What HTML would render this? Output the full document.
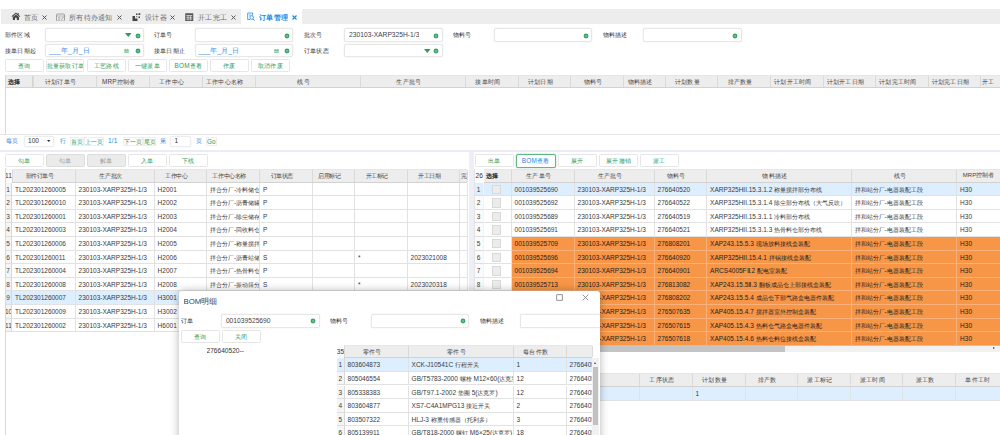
<!DOCTYPE html><html><head><meta charset="utf-8"><title>订单管理</title><style>
html,body{margin:0;padding:0;}
body{width:1000px;height:435px;overflow:hidden;background:#fff;position:relative;font-family:"Liberation Sans",sans-serif;font-size:6.5px;color:#3a3a3a;}
div{position:absolute;box-sizing:border-box;}
.t{white-space:nowrap;overflow:hidden;}
.tabbar{background:#ededed;}
.tab{color:#6a6a6a;font-size:7.3px;letter-spacing:.3px;}
.inp{background:#fff;border:1px solid #e7e7e7;border-radius:2px;box-shadow:0 0 1.5px rgba(0,0,0,.10);}
.lbl{font-size:6.4px;letter-spacing:.2px;color:#333;}
.btn{background:#fff;border:1px solid #e6e6e6;border-radius:1.5px;color:#2e9b5a;text-align:center;font-size:6.4px;letter-spacing:.25px;white-space:nowrap;overflow:hidden;}
.btn.dis{background:#ebebeb;color:#9a9a9a;border-color:#dcdcdc;}
.hdr{background:#ededed;border-bottom:1px solid #d2d2d2;border-top:1px solid #e6e6e6;}
.hc{border-right:1px solid #dadada;text-align:center;color:#444;font-size:6px;white-space:nowrap;overflow:hidden;}
.cell{border-right:1px solid #e2e2e2;border-bottom:1px solid #e2e2e2;white-space:nowrap;overflow:hidden;padding-left:3px;color:#3a3a3a;}
.row{ }
.sel .cell,.sel .rn{background:#ddeeff !important;}
.org .cell.d{background:#f79646;border-color:#f9b07a;color:#222;}
.rn{background:#f5f5f5;border-right:1px solid #d8d8d8;border-bottom:1px solid #dedede;text-align:center;color:#3a3a3a;white-space:nowrap;overflow:hidden;}
.dot{border-radius:50%;background:#2e9b5a;}
.dot:after{content:"";position:absolute;left:35%;top:35%;width:30%;height:30%;background:#fff;border-radius:50%;}
.tri{width:0;height:0;border-left:2.9px solid transparent;border-right:2.9px solid transparent;border-top:3.6px solid #2e9b5a;}
.c{font-size:.98em;}
.chk{background:#ececec;border:1px solid #d9d9d9;}
</style></head><body>
<div class="tabbar" style="left:1px;top:8.5px;width:999px;height:15px;"></div>
<div class="" style="left:240.8px;top:8.5px;width:61.4px;height:15px;background:#fff;"></div>
<svg style="position:absolute;left:10.8px;top:12.3px" width="9.8" height="8.2" viewBox="0 0 18 16"><path d="M9 1 L0.5 8.5 L2 9.8 L9 3.6 L16 9.8 L17.5 8.5 L14.5 5.8 V2 H12.5 V4.1 Z" fill="#444"/><path d="M3 10 L9 4.8 L15 10 V15.5 H10.8 V11 H7.2 V15.5 H3 Z" fill="#444"/></svg>
<div class="t tab" style="left:24px;top:12.7px;height:10px;line-height:10px;">首页</div>
<svg style="position:absolute;left:42px;top:15px" width="5" height="5" viewBox="0 0 10 10"><path d="M1 1 L9 9 M9 1 L1 9" stroke="#555" stroke-width="2.0"/></svg>
<svg style="position:absolute;left:56px;top:12.5px" width="9" height="8.5" viewBox="0 0 18 17"><rect x="1" y="2" width="16" height="14" rx="2" fill="none" stroke="#8a8a8a" stroke-width="1.5"/><path d="M1 6 H17" stroke="#8a8a8a" stroke-width="1.1"/><path d="M4 9.5 H9 M4 12.5 H8" stroke="#8a8a8a" stroke-width="1.3"/><path d="M10.5 13.5 L15.5 7.5" stroke="#8a8a8a" stroke-width="1.5"/></svg>
<div class="t tab" style="left:69px;top:12.7px;height:10px;line-height:10px;">所有待办通知</div>
<svg style="position:absolute;left:117px;top:15px" width="5" height="5" viewBox="0 0 10 10"><path d="M1 1 L9 9 M9 1 L1 9" stroke="#555" stroke-width="2.0"/></svg>
<svg style="position:absolute;left:132px;top:12.5px" width="9" height="8.5" viewBox="0 0 18 17"><path d="M1 6 H6 V11 H11 V16 H1 Z" fill="#444"/><rect x="8" y="1" width="3" height="3" fill="#444"/><rect x="13" y="0.5" width="3.5" height="3.5" fill="#444"/><rect x="13" y="7" width="3" height="3" fill="#444"/><rect x="8.5" y="6.5" width="2" height="2" fill="#444"/></svg>
<div class="t tab" style="left:145px;top:12.7px;height:10px;line-height:10px;">设计器</div>
<svg style="position:absolute;left:170px;top:15px" width="5" height="5" viewBox="0 0 10 10"><path d="M1 1 L9 9 M9 1 L1 9" stroke="#555" stroke-width="2.0"/></svg>
<svg style="position:absolute;left:185px;top:12.5px" width="8.5" height="8.5" viewBox="0 0 17 17"><rect x="0.5" y="0.5" width="16" height="16" fill="#555"/><path d="M2.5 5 H14.5 M2.5 8.5 H14.5 M2.5 12 H14.5" stroke="#ededed" stroke-width="1.4"/><path d="M6 5 V15 M11 5 V15" stroke="#ededed" stroke-width="1.2"/></svg>
<div class="t tab" style="left:198px;top:12.7px;height:10px;line-height:10px;">开工完工</div>
<svg style="position:absolute;left:231px;top:15px" width="5" height="5" viewBox="0 0 10 10"><path d="M1 1 L9 9 M9 1 L1 9" stroke="#555" stroke-width="2.0"/></svg>
<svg style="position:absolute;left:246px;top:12.2px" width="9.4" height="9" viewBox="0 0 18 18"><path d="M3 2 H13 V7" fill="none" stroke="#1e88e5" stroke-width="1.6"/><path d="M3 2 V15 H8" fill="none" stroke="#1e88e5" stroke-width="1.6"/><circle cx="11" cy="11" r="3.6" fill="none" stroke="#1e88e5" stroke-width="1.6"/><path d="M13.6 13.8 L17 17" stroke="#1e88e5" stroke-width="1.8"/><path d="M5.5 6 H10" stroke="#1e88e5" stroke-width="1.3"/></svg>
<div class="t tab" style="left:259px;top:12.7px;height:10px;line-height:10px;color:#1e88e5;font-weight:bold;font-size:7.2px;">订单管理</div>
<svg style="position:absolute;left:292px;top:15px" width="5" height="5" viewBox="0 0 10 10"><path d="M1 1 L9 9 M9 1 L1 9" stroke="#1e88e5" stroke-width="2.3"/></svg>
<div class="t lbl" style="left:5px;top:28px;height:14px;line-height:14px;">部件区域</div>
<div class="t lbl" style="left:154px;top:28px;height:14px;line-height:14px;">订单号</div>
<div class="t lbl" style="left:304px;top:28px;height:14px;line-height:14px;">批次号</div>
<div class="t lbl" style="left:453px;top:28px;height:14px;line-height:14px;">物料号</div>
<div class="t lbl" style="left:602.5px;top:28px;height:14px;line-height:14px;">物料描述</div>
<div class="inp" style="left:45.2px;top:28.2px;width:98.6px;height:13.4px;"></div>
<svg style="position:absolute;left:134.50px;top:32.50px" width="6" height="6" viewBox="0 0 6 6"><circle cx="3" cy="3" r="2.45" fill="#3aa568"/><circle cx="3" cy="3" r="0.7" fill="#b9e0c9"/></svg>
<svg style="position:absolute;left:125.40px;top:33.45px" width="6.6" height="3.9" viewBox="0 0 6.6 3.9"><path d="M0 0 H6.6 L3.3 3.9 Z" fill="#2e9b5a"/></svg>
<div class="inp" style="left:194.6px;top:28.2px;width:98.6px;height:13.4px;"></div>
<svg style="position:absolute;left:283.90px;top:32.50px" width="6" height="6" viewBox="0 0 6 6"><circle cx="3" cy="3" r="2.45" fill="#3aa568"/><circle cx="3" cy="3" r="0.7" fill="#b9e0c9"/></svg>
<div class="inp" style="left:344.1px;top:28.2px;width:98.6px;height:13.4px;"></div>
<div class="t " style="left:349.1px;top:28.2px;height:13.4px;line-height:13.4px;font-size:6.7px;color:#444;">230103-XARP325H-1/3</div>
<svg style="position:absolute;left:433.40px;top:32.50px" width="6" height="6" viewBox="0 0 6 6"><circle cx="3" cy="3" r="2.45" fill="#3aa568"/><circle cx="3" cy="3" r="0.7" fill="#b9e0c9"/></svg>
<div class="inp" style="left:493.6px;top:28.2px;width:98.6px;height:13.4px;"></div>
<svg style="position:absolute;left:582.90px;top:32.50px" width="6" height="6" viewBox="0 0 6 6"><circle cx="3" cy="3" r="2.45" fill="#3aa568"/><circle cx="3" cy="3" r="0.7" fill="#b9e0c9"/></svg>
<div class="inp" style="left:643px;top:28.2px;width:98.6px;height:13.4px;"></div>
<svg style="position:absolute;left:732.30px;top:32.50px" width="6" height="6" viewBox="0 0 6 6"><circle cx="3" cy="3" r="2.45" fill="#3aa568"/><circle cx="3" cy="3" r="0.7" fill="#b9e0c9"/></svg>
<div class="t lbl" style="left:5px;top:44px;height:14px;line-height:14px;">接单日期起</div>
<div class="t lbl" style="left:154px;top:44px;height:14px;line-height:14px;">接单日期止</div>
<div class="t lbl" style="left:304px;top:44px;height:14px;line-height:14px;">订单状态</div>
<div class="inp" style="left:45.2px;top:44px;width:98.6px;height:13.4px;"></div>
<div class="t " style="left:50.2px;top:44px;height:13.4px;line-height:13.4px;color:#3d8fe0;font-size:7.2px;margin-left:-1.4px;">___年_月_日</div>
<svg style="position:absolute;left:134.50px;top:48.30px" width="6" height="6" viewBox="0 0 6 6"><circle cx="3" cy="3" r="2.45" fill="#3aa568"/><circle cx="3" cy="3" r="0.7" fill="#b9e0c9"/></svg>
<svg style="position:absolute;left:124.20000000000002px;top:48.7px" width="5" height="4.6" viewBox="0 0 10 10"><rect x="0.5" y="1.5" width="9" height="8" fill="#6dbb8f"/><path d="M2 0 V3 M8 0 V3" stroke="#2e9b5a" stroke-width="1.6"/><path d="M0.5 5.5 H9.5 M3.5 3 V9.5 M6.5 3 V9.5" stroke="#e8f5ee" stroke-width="0.9"/></svg>
<div class="inp" style="left:194.6px;top:44px;width:98.6px;height:13.4px;"></div>
<div class="t " style="left:199.6px;top:44px;height:13.4px;line-height:13.4px;color:#3d8fe0;font-size:7.2px;margin-left:-1.4px;">___年_月_日</div>
<svg style="position:absolute;left:283.90px;top:48.30px" width="6" height="6" viewBox="0 0 6 6"><circle cx="3" cy="3" r="2.45" fill="#3aa568"/><circle cx="3" cy="3" r="0.7" fill="#b9e0c9"/></svg>
<svg style="position:absolute;left:273.59999999999997px;top:48.7px" width="5" height="4.6" viewBox="0 0 10 10"><rect x="0.5" y="1.5" width="9" height="8" fill="#6dbb8f"/><path d="M2 0 V3 M8 0 V3" stroke="#2e9b5a" stroke-width="1.6"/><path d="M0.5 5.5 H9.5 M3.5 3 V9.5 M6.5 3 V9.5" stroke="#e8f5ee" stroke-width="0.9"/></svg>
<div class="inp" style="left:344.1px;top:44px;width:98.6px;height:13.4px;"></div>
<svg style="position:absolute;left:433.40px;top:48.30px" width="6" height="6" viewBox="0 0 6 6"><circle cx="3" cy="3" r="2.45" fill="#3aa568"/><circle cx="3" cy="3" r="0.7" fill="#b9e0c9"/></svg>
<svg style="position:absolute;left:424.30px;top:49.25px" width="6.6" height="3.9" viewBox="0 0 6.6 3.9"><path d="M0 0 H6.6 L3.3 3.9 Z" fill="#2e9b5a"/></svg>
<div class="btn " style="left:5px;top:59.2px;width:38.7px;height:13.3px;line-height:11.8px;">查询</div>
<div class="btn " style="left:45.5px;top:59.2px;width:38.7px;height:13.3px;line-height:11.8px;">批量获取订单</div>
<div class="btn " style="left:87px;top:59.2px;width:38.7px;height:13.3px;line-height:11.8px;">工艺路线</div>
<div class="btn " style="left:128px;top:59.2px;width:38.7px;height:13.3px;line-height:11.8px;">一键派单</div>
<div class="btn " style="left:169px;top:59.2px;width:38.7px;height:13.3px;line-height:11.8px;">BOM查看</div>
<div class="btn " style="left:210px;top:59.2px;width:38.7px;height:13.3px;line-height:11.8px;">作废</div>
<div class="btn " style="left:251px;top:59.2px;width:38.7px;height:13.3px;line-height:11.8px;">取消作废</div>
<div class="hdr" style="left:5px;top:74.5px;width:995px;height:13.5px;"></div>
<div class="hc" style="left:5px;top:75.5px;width:28.6px;height:11.5px;line-height:11.5px;font-size:6.4px;letter-spacing:0.2px;padding-right:8px;">选择</div>
<div class="hc" style="left:33.6px;top:75.5px;width:62.99999999999999px;height:11.5px;line-height:11.5px;font-size:6.4px;letter-spacing:0.2px;padding-right:8px;">计划订单号</div>
<div class="hc" style="left:96.6px;top:75.5px;width:53.0px;height:11.5px;line-height:11.5px;font-size:6.4px;letter-spacing:0.2px;padding-right:8px;">MRP控制者</div>
<div class="hc" style="left:149.6px;top:75.5px;width:53.0px;height:11.5px;line-height:11.5px;font-size:6.4px;letter-spacing:0.2px;padding-right:8px;">工作中心</div>
<div class="hc" style="left:202.6px;top:75.5px;width:53.0px;height:11.5px;line-height:11.5px;font-size:6.4px;letter-spacing:0.2px;padding-right:8px;">工作中心名称</div>
<div class="hc" style="left:255.6px;top:75.5px;width:105.00000000000003px;height:11.5px;line-height:11.5px;font-size:6.4px;letter-spacing:0.2px;padding-right:8px;">线号</div>
<div class="hc" style="left:360.6px;top:75.5px;width:105.5px;height:11.5px;line-height:11.5px;font-size:6.4px;letter-spacing:0.2px;padding-right:8px;">生产批号</div>
<div class="hc" style="left:466.1px;top:75.5px;width:52.5px;height:11.5px;line-height:11.5px;font-size:6.4px;letter-spacing:0.2px;padding-right:8px;">接单时间</div>
<div class="hc" style="left:518.6px;top:75.5px;width:52.5px;height:11.5px;line-height:11.5px;font-size:6.4px;letter-spacing:0.2px;padding-right:8px;">计划日期</div>
<div class="hc" style="left:571.1px;top:75.5px;width:52.5px;height:11.5px;line-height:11.5px;font-size:6.4px;letter-spacing:0.2px;padding-right:8px;">物料号</div>
<div class="hc" style="left:623.6px;top:75.5px;width:42.0px;height:11.5px;line-height:11.5px;font-size:6.4px;letter-spacing:0.2px;padding-right:8px;">物料描述</div>
<div class="hc" style="left:665.6px;top:75.5px;width:52.5px;height:11.5px;line-height:11.5px;font-size:6.4px;letter-spacing:0.2px;padding-right:8px;">计划数量</div>
<div class="hc" style="left:718.1px;top:75.5px;width:53.0px;height:11.5px;line-height:11.5px;font-size:6.4px;letter-spacing:0.2px;padding-right:8px;">排产数量</div>
<div class="hc" style="left:771.1px;top:75.5px;width:52.5px;height:11.5px;line-height:11.5px;font-size:6.4px;letter-spacing:0.2px;padding-right:8px;">计划开工时间</div>
<div class="hc" style="left:823.6px;top:75.5px;width:52.5px;height:11.5px;line-height:11.5px;font-size:6.4px;letter-spacing:0.2px;padding-right:8px;">计划开工日期</div>
<div class="hc" style="left:876.1px;top:75.5px;width:52.5px;height:11.5px;line-height:11.5px;font-size:6.4px;letter-spacing:0.2px;padding-right:8px;">计划完工时间</div>
<div class="hc" style="left:928.6px;top:75.5px;width:52.5px;height:11.5px;line-height:11.5px;font-size:6.4px;letter-spacing:0.2px;padding-right:8px;">计划完工日期</div>
<div class="hc" style="left:981.1px;top:75.5px;width:22.5px;height:11.5px;line-height:11.5px;font-size:6.4px;letter-spacing:0.2px;padding-right:8px;">开工</div>
<div style="left:5px;top:75.5px;width:28px;height:11.5px;line-height:11px;font-weight:bold;color:#222;padding-left:3px;font-size:6.2px;background:#ececec;border-right:1px solid #d4d4d4;">选择</div>
<div class="" style="left:4.5px;top:74.5px;width:1px;height:60px;background:#d9d9d9;"></div>
<div class="" style="left:0px;top:134px;width:1000px;height:1px;background:#e6e6e6;"></div>
<div class="" style="left:0px;top:150px;width:1000px;height:2px;background:#ececf4;"></div>
<div class="t " style="left:6px;top:135px;height:12.5px;line-height:12.5px;color:#1e88e5;font-size:6.4px;letter-spacing:.25px;">每页</div>
<div class="inp" style="left:24px;top:135.5px;width:30px;height:11.5px;border-color:#ececec;"></div>
<div class="t " style="left:28px;top:135px;height:12.5px;line-height:12.5px;font-size:6.6px;color:#333;">100</div>
<svg style="position:absolute;left:47.30px;top:140.15px" width="3.4" height="2.1" viewBox="0 0 3.4 2.1"><path d="M0 0 H3.4 L1.7 2.1 Z" fill="#333"/></svg>
<div class="t " style="left:59.5px;top:135px;height:12.5px;line-height:12.5px;color:#1e88e5;font-size:6.4px;letter-spacing:.25px;">行</div>
<div class="t" style="left:70px;top:137.2px;width:14px;height:8.8px;line-height:7.5px;border:1px solid #eeeeee;background:#fefefe;color:#2e9b5a;font-size:6.4px;letter-spacing:.1px;text-align:center;">首页</div>
<div class="t" style="left:84px;top:137.2px;width:20px;height:8.8px;line-height:7.5px;border:1px solid #eeeeee;background:#fefefe;color:#2e9b5a;font-size:6.4px;letter-spacing:.1px;text-align:center;">上一页</div>
<div class="t " style="left:108px;top:135px;height:12.5px;line-height:12.5px;color:#1e88e5;font-size:6.4px;letter-spacing:.25px;">1/1</div>
<div class="t" style="left:122.5px;top:137.2px;width:20px;height:8.8px;line-height:7.5px;border:1px solid #eeeeee;background:#fefefe;color:#2e9b5a;font-size:6.4px;letter-spacing:.1px;text-align:center;">下一页</div>
<div class="t" style="left:142.5px;top:137.2px;width:13.5px;height:8.8px;line-height:7.5px;border:1px solid #eeeeee;background:#fefefe;color:#2e9b5a;font-size:6.4px;letter-spacing:.1px;text-align:center;">尾页</div>
<div class="t " style="left:160px;top:135px;height:12.5px;line-height:12.5px;color:#1e88e5;font-size:6.4px;letter-spacing:.25px;">第</div>
<div class="inp" style="left:170px;top:135.5px;width:20.5px;height:11.5px;border-color:#ececec;"></div>
<div class="t " style="left:174.5px;top:135px;height:12.5px;line-height:12.5px;font-size:6.6px;color:#333;">1</div>
<div class="t " style="left:196px;top:135px;height:12.5px;line-height:12.5px;color:#1e88e5;font-size:6.4px;letter-spacing:.25px;">页</div>
<div class="t" style="left:205.5px;top:137.2px;width:11.5px;height:8.8px;line-height:7.5px;border:1px solid #eeeeee;background:#fefefe;color:#2e9b5a;font-size:6.4px;letter-spacing:.1px;text-align:center;">Go</div>
<div class="btn " style="left:5px;top:154px;width:38.5px;height:13px;line-height:11.5px;">勾单</div>
<div class="btn dis" style="left:46px;top:154px;width:38.5px;height:13px;line-height:11.5px;">勾单</div>
<div class="btn dis" style="left:87px;top:154px;width:38.5px;height:13px;line-height:11.5px;">解单</div>
<div class="btn " style="left:128px;top:154px;width:38.5px;height:13px;line-height:11.5px;">入单</div>
<div class="btn " style="left:169px;top:154px;width:38.5px;height:13px;line-height:11.5px;">下线</div>
<div class="hdr" style="left:5px;top:168.5px;width:462px;height:14.1px;"></div>
<div class="hc" style="left:5px;top:169.5px;width:7.6px;height:12.1px;line-height:12.1px;font-size:5.8px;letter-spacing:-0.45px;padding-right:0px;"></div>
<div class="hc" style="left:12.6px;top:169.5px;width:62.99999999999999px;height:12.1px;line-height:12.1px;font-size:5.8px;letter-spacing:-0.45px;padding-right:8px;">部件订单号</div>
<div class="hc" style="left:75.6px;top:169.5px;width:79.0px;height:12.1px;line-height:12.1px;font-size:5.8px;letter-spacing:-0.45px;padding-right:8px;">生产批次</div>
<div class="hc" style="left:154.6px;top:169.5px;width:52.5px;height:12.1px;line-height:12.1px;font-size:5.8px;letter-spacing:-0.45px;padding-right:8px;">工作中心</div>
<div class="hc" style="left:207.1px;top:169.5px;width:53.00000000000003px;height:12.1px;line-height:12.1px;font-size:5.8px;letter-spacing:-0.45px;padding-right:8px;">工作中心名称</div>
<div class="hc" style="left:260.1px;top:169.5px;width:52.5px;height:12.1px;line-height:12.1px;font-size:5.8px;letter-spacing:-0.45px;padding-right:8px;">订单状态</div>
<div class="hc" style="left:312.6px;top:169.5px;width:42.5px;height:12.1px;line-height:12.1px;font-size:5.8px;letter-spacing:-0.45px;padding-right:8px;">启用标记</div>
<div class="hc" style="left:355.1px;top:169.5px;width:52.5px;height:12.1px;line-height:12.1px;font-size:5.8px;letter-spacing:-0.45px;padding-right:8px;">开工标记</div>
<div class="hc" style="left:407.6px;top:169.5px;width:52.5px;height:12.1px;line-height:12.1px;font-size:5.8px;letter-spacing:-0.45px;padding-right:8px;">开工日期</div>
<div class="hc" style="left:460.1px;top:169.5px;width:7.5px;height:12.1px;line-height:12.1px;font-size:5.8px;letter-spacing:-0.45px;padding-right:0px;">完</div>
<div class="t" style="left:5px;top:168.5px;width:7px;height:14px;line-height:14px;font-size:6.6px;background:#fbfbfb;color:#333;">11</div>
<div class="row " style="left:0;top:182.60px;width:1000px;height:13.6px;">
<div class="rn" style="left:5px;top:0;width:7px;height:13.6px;line-height:14.799999999999999px;">1</div>
<div class="cell d" style="left:12px;top:0;width:63.599999999999994px;height:13.6px;line-height:14.799999999999999px;">TL202301260005</div>
<div class="cell d" style="left:75.6px;top:0;width:79.0px;height:13.6px;line-height:14.799999999999999px;">230103-XARP325H-1/3</div>
<div class="cell d" style="left:154.6px;top:0;width:52.5px;height:13.6px;line-height:14.799999999999999px;">H2001</div>
<div class="cell d" style="left:207.1px;top:0;width:53.00000000000003px;height:13.6px;line-height:14.799999999999999px;"><span class="c">拌合分厂</span>-<span class="c">冷料储仓</span></div>
<div class="cell d" style="left:260.1px;top:0;width:52.5px;height:13.6px;line-height:14.799999999999999px;">P</div>
<div class="cell d" style="left:312.6px;top:0;width:42.5px;height:13.6px;line-height:14.799999999999999px;"></div>
<div class="cell d" style="left:355.1px;top:0;width:52.5px;height:13.6px;line-height:14.799999999999999px;"></div>
<div class="cell d" style="left:407.6px;top:0;width:52.5px;height:13.6px;line-height:14.799999999999999px;"></div>
<div class="cell d" style="left:460.1px;top:0;width:7.5px;height:13.6px;line-height:14.799999999999999px;"></div>
</div>
<div class="row " style="left:0;top:196.20px;width:1000px;height:13.6px;">
<div class="rn" style="left:5px;top:0;width:7px;height:13.6px;line-height:14.799999999999999px;">2</div>
<div class="cell d" style="left:12px;top:0;width:63.599999999999994px;height:13.6px;line-height:14.799999999999999px;">TL202301260010</div>
<div class="cell d" style="left:75.6px;top:0;width:79.0px;height:13.6px;line-height:14.799999999999999px;">230103-XARP325H-1/3</div>
<div class="cell d" style="left:154.6px;top:0;width:52.5px;height:13.6px;line-height:14.799999999999999px;">H2002</div>
<div class="cell d" style="left:207.1px;top:0;width:53.00000000000003px;height:13.6px;line-height:14.799999999999999px;"><span class="c">拌合分厂</span>-<span class="c">沥青储罐</span></div>
<div class="cell d" style="left:260.1px;top:0;width:52.5px;height:13.6px;line-height:14.799999999999999px;">P</div>
<div class="cell d" style="left:312.6px;top:0;width:42.5px;height:13.6px;line-height:14.799999999999999px;"></div>
<div class="cell d" style="left:355.1px;top:0;width:52.5px;height:13.6px;line-height:14.799999999999999px;"></div>
<div class="cell d" style="left:407.6px;top:0;width:52.5px;height:13.6px;line-height:14.799999999999999px;"></div>
<div class="cell d" style="left:460.1px;top:0;width:7.5px;height:13.6px;line-height:14.799999999999999px;"></div>
</div>
<div class="row " style="left:0;top:209.80px;width:1000px;height:13.6px;">
<div class="rn" style="left:5px;top:0;width:7px;height:13.6px;line-height:14.799999999999999px;">3</div>
<div class="cell d" style="left:12px;top:0;width:63.599999999999994px;height:13.6px;line-height:14.799999999999999px;">TL202301260001</div>
<div class="cell d" style="left:75.6px;top:0;width:79.0px;height:13.6px;line-height:14.799999999999999px;">230103-XARP325H-1/3</div>
<div class="cell d" style="left:154.6px;top:0;width:52.5px;height:13.6px;line-height:14.799999999999999px;">H2003</div>
<div class="cell d" style="left:207.1px;top:0;width:53.00000000000003px;height:13.6px;line-height:14.799999999999999px;"><span class="c">拌合分厂</span>-<span class="c">除尘储存</span></div>
<div class="cell d" style="left:260.1px;top:0;width:52.5px;height:13.6px;line-height:14.799999999999999px;">P</div>
<div class="cell d" style="left:312.6px;top:0;width:42.5px;height:13.6px;line-height:14.799999999999999px;"></div>
<div class="cell d" style="left:355.1px;top:0;width:52.5px;height:13.6px;line-height:14.799999999999999px;"></div>
<div class="cell d" style="left:407.6px;top:0;width:52.5px;height:13.6px;line-height:14.799999999999999px;"></div>
<div class="cell d" style="left:460.1px;top:0;width:7.5px;height:13.6px;line-height:14.799999999999999px;"></div>
</div>
<div class="row " style="left:0;top:223.40px;width:1000px;height:13.6px;">
<div class="rn" style="left:5px;top:0;width:7px;height:13.6px;line-height:14.799999999999999px;">4</div>
<div class="cell d" style="left:12px;top:0;width:63.599999999999994px;height:13.6px;line-height:14.799999999999999px;">TL202301260003</div>
<div class="cell d" style="left:75.6px;top:0;width:79.0px;height:13.6px;line-height:14.799999999999999px;">230103-XARP325H-1/3</div>
<div class="cell d" style="left:154.6px;top:0;width:52.5px;height:13.6px;line-height:14.799999999999999px;">H2004</div>
<div class="cell d" style="left:207.1px;top:0;width:53.00000000000003px;height:13.6px;line-height:14.799999999999999px;"><span class="c">拌合分厂</span>-<span class="c">回收料仓</span></div>
<div class="cell d" style="left:260.1px;top:0;width:52.5px;height:13.6px;line-height:14.799999999999999px;">P</div>
<div class="cell d" style="left:312.6px;top:0;width:42.5px;height:13.6px;line-height:14.799999999999999px;"></div>
<div class="cell d" style="left:355.1px;top:0;width:52.5px;height:13.6px;line-height:14.799999999999999px;"></div>
<div class="cell d" style="left:407.6px;top:0;width:52.5px;height:13.6px;line-height:14.799999999999999px;"></div>
<div class="cell d" style="left:460.1px;top:0;width:7.5px;height:13.6px;line-height:14.799999999999999px;"></div>
</div>
<div class="row " style="left:0;top:237.00px;width:1000px;height:13.6px;">
<div class="rn" style="left:5px;top:0;width:7px;height:13.6px;line-height:14.799999999999999px;">5</div>
<div class="cell d" style="left:12px;top:0;width:63.599999999999994px;height:13.6px;line-height:14.799999999999999px;">TL202301260006</div>
<div class="cell d" style="left:75.6px;top:0;width:79.0px;height:13.6px;line-height:14.799999999999999px;">230103-XARP325H-1/3</div>
<div class="cell d" style="left:154.6px;top:0;width:52.5px;height:13.6px;line-height:14.799999999999999px;">H2005</div>
<div class="cell d" style="left:207.1px;top:0;width:53.00000000000003px;height:13.6px;line-height:14.799999999999999px;"><span class="c">拌合分厂</span>-<span class="c">称量搅拌</span></div>
<div class="cell d" style="left:260.1px;top:0;width:52.5px;height:13.6px;line-height:14.799999999999999px;">P</div>
<div class="cell d" style="left:312.6px;top:0;width:42.5px;height:13.6px;line-height:14.799999999999999px;"></div>
<div class="cell d" style="left:355.1px;top:0;width:52.5px;height:13.6px;line-height:14.799999999999999px;"></div>
<div class="cell d" style="left:407.6px;top:0;width:52.5px;height:13.6px;line-height:14.799999999999999px;"></div>
<div class="cell d" style="left:460.1px;top:0;width:7.5px;height:13.6px;line-height:14.799999999999999px;"></div>
</div>
<div class="row " style="left:0;top:250.60px;width:1000px;height:13.6px;">
<div class="rn" style="left:5px;top:0;width:7px;height:13.6px;line-height:14.799999999999999px;">6</div>
<div class="cell d" style="left:12px;top:0;width:63.599999999999994px;height:13.6px;line-height:14.799999999999999px;">TL202301260011</div>
<div class="cell d" style="left:75.6px;top:0;width:79.0px;height:13.6px;line-height:14.799999999999999px;">230103-XARP325H-1/3</div>
<div class="cell d" style="left:154.6px;top:0;width:52.5px;height:13.6px;line-height:14.799999999999999px;">H2006</div>
<div class="cell d" style="left:207.1px;top:0;width:53.00000000000003px;height:13.6px;line-height:14.799999999999999px;"><span class="c">拌合分厂</span>-<span class="c">沥青站储</span></div>
<div class="cell d" style="left:260.1px;top:0;width:52.5px;height:13.6px;line-height:14.799999999999999px;">S</div>
<div class="cell d" style="left:312.6px;top:0;width:42.5px;height:13.6px;line-height:14.799999999999999px;"></div>
<div class="cell d" style="left:355.1px;top:0;width:52.5px;height:13.6px;line-height:14.799999999999999px;">*</div>
<div class="cell d" style="left:407.6px;top:0;width:52.5px;height:13.6px;line-height:14.799999999999999px;">2023021008</div>
<div class="cell d" style="left:460.1px;top:0;width:7.5px;height:13.6px;line-height:14.799999999999999px;"></div>
</div>
<div class="row " style="left:0;top:264.20px;width:1000px;height:13.6px;">
<div class="rn" style="left:5px;top:0;width:7px;height:13.6px;line-height:14.799999999999999px;">7</div>
<div class="cell d" style="left:12px;top:0;width:63.599999999999994px;height:13.6px;line-height:14.799999999999999px;">TL202301260004</div>
<div class="cell d" style="left:75.6px;top:0;width:79.0px;height:13.6px;line-height:14.799999999999999px;">230103-XARP325H-1/3</div>
<div class="cell d" style="left:154.6px;top:0;width:52.5px;height:13.6px;line-height:14.799999999999999px;">H2007</div>
<div class="cell d" style="left:207.1px;top:0;width:53.00000000000003px;height:13.6px;line-height:14.799999999999999px;"><span class="c">拌合分厂</span>-<span class="c">热骨料仓</span></div>
<div class="cell d" style="left:260.1px;top:0;width:52.5px;height:13.6px;line-height:14.799999999999999px;">P</div>
<div class="cell d" style="left:312.6px;top:0;width:42.5px;height:13.6px;line-height:14.799999999999999px;"></div>
<div class="cell d" style="left:355.1px;top:0;width:52.5px;height:13.6px;line-height:14.799999999999999px;"></div>
<div class="cell d" style="left:407.6px;top:0;width:52.5px;height:13.6px;line-height:14.799999999999999px;"></div>
<div class="cell d" style="left:460.1px;top:0;width:7.5px;height:13.6px;line-height:14.799999999999999px;"></div>
</div>
<div class="row " style="left:0;top:277.80px;width:1000px;height:13.6px;">
<div class="rn" style="left:5px;top:0;width:7px;height:13.6px;line-height:14.799999999999999px;">8</div>
<div class="cell d" style="left:12px;top:0;width:63.599999999999994px;height:13.6px;line-height:14.799999999999999px;">TL202301260008</div>
<div class="cell d" style="left:75.6px;top:0;width:79.0px;height:13.6px;line-height:14.799999999999999px;">230103-XARP325H-1/3</div>
<div class="cell d" style="left:154.6px;top:0;width:52.5px;height:13.6px;line-height:14.799999999999999px;">H2008</div>
<div class="cell d" style="left:207.1px;top:0;width:53.00000000000003px;height:13.6px;line-height:14.799999999999999px;"><span class="c">拌合分厂</span>-<span class="c">振动筛分</span></div>
<div class="cell d" style="left:260.1px;top:0;width:52.5px;height:13.6px;line-height:14.799999999999999px;">S</div>
<div class="cell d" style="left:312.6px;top:0;width:42.5px;height:13.6px;line-height:14.799999999999999px;"></div>
<div class="cell d" style="left:355.1px;top:0;width:52.5px;height:13.6px;line-height:14.799999999999999px;">*</div>
<div class="cell d" style="left:407.6px;top:0;width:52.5px;height:13.6px;line-height:14.799999999999999px;">2023020318</div>
<div class="cell d" style="left:460.1px;top:0;width:7.5px;height:13.6px;line-height:14.799999999999999px;"></div>
</div>
<div class="row sel" style="left:0;top:291.40px;width:1000px;height:13.6px;">
<div class="rn" style="left:5px;top:0;width:7px;height:13.6px;line-height:14.799999999999999px;">9</div>
<div class="cell d" style="left:12px;top:0;width:63.599999999999994px;height:13.6px;line-height:14.799999999999999px;">TL202301260007</div>
<div class="cell d" style="left:75.6px;top:0;width:79.0px;height:13.6px;line-height:14.799999999999999px;">230103-XARP325H-1/3</div>
<div class="cell d" style="left:154.6px;top:0;width:52.5px;height:13.6px;line-height:14.799999999999999px;">H3001</div>
<div class="cell d" style="left:207.1px;top:0;width:53.00000000000003px;height:13.6px;line-height:14.799999999999999px;"></div>
<div class="cell d" style="left:260.1px;top:0;width:52.5px;height:13.6px;line-height:14.799999999999999px;"></div>
<div class="cell d" style="left:312.6px;top:0;width:42.5px;height:13.6px;line-height:14.799999999999999px;"></div>
<div class="cell d" style="left:355.1px;top:0;width:52.5px;height:13.6px;line-height:14.799999999999999px;"></div>
<div class="cell d" style="left:407.6px;top:0;width:52.5px;height:13.6px;line-height:14.799999999999999px;"></div>
<div class="cell d" style="left:460.1px;top:0;width:7.5px;height:13.6px;line-height:14.799999999999999px;"></div>
</div>
<div class="row " style="left:0;top:305.00px;width:1000px;height:13.6px;">
<div class="rn" style="left:5px;top:0;width:7px;height:13.6px;line-height:14.799999999999999px;">10</div>
<div class="cell d" style="left:12px;top:0;width:63.599999999999994px;height:13.6px;line-height:14.799999999999999px;">TL202301260009</div>
<div class="cell d" style="left:75.6px;top:0;width:79.0px;height:13.6px;line-height:14.799999999999999px;">230103-XARP325H-1/3</div>
<div class="cell d" style="left:154.6px;top:0;width:52.5px;height:13.6px;line-height:14.799999999999999px;">H3002</div>
<div class="cell d" style="left:207.1px;top:0;width:53.00000000000003px;height:13.6px;line-height:14.799999999999999px;"></div>
<div class="cell d" style="left:260.1px;top:0;width:52.5px;height:13.6px;line-height:14.799999999999999px;"></div>
<div class="cell d" style="left:312.6px;top:0;width:42.5px;height:13.6px;line-height:14.799999999999999px;"></div>
<div class="cell d" style="left:355.1px;top:0;width:52.5px;height:13.6px;line-height:14.799999999999999px;"></div>
<div class="cell d" style="left:407.6px;top:0;width:52.5px;height:13.6px;line-height:14.799999999999999px;"></div>
<div class="cell d" style="left:460.1px;top:0;width:7.5px;height:13.6px;line-height:14.799999999999999px;"></div>
</div>
<div class="row " style="left:0;top:318.60px;width:1000px;height:13.6px;">
<div class="rn" style="left:5px;top:0;width:7px;height:13.6px;line-height:14.799999999999999px;">11</div>
<div class="cell d" style="left:12px;top:0;width:63.599999999999994px;height:13.6px;line-height:14.799999999999999px;">TL202301260002</div>
<div class="cell d" style="left:75.6px;top:0;width:79.0px;height:13.6px;line-height:14.799999999999999px;">230103-XARP325H-1/3</div>
<div class="cell d" style="left:154.6px;top:0;width:52.5px;height:13.6px;line-height:14.799999999999999px;">H6001</div>
<div class="cell d" style="left:207.1px;top:0;width:53.00000000000003px;height:13.6px;line-height:14.799999999999999px;"></div>
<div class="cell d" style="left:260.1px;top:0;width:52.5px;height:13.6px;line-height:14.799999999999999px;"></div>
<div class="cell d" style="left:312.6px;top:0;width:42.5px;height:13.6px;line-height:14.799999999999999px;"></div>
<div class="cell d" style="left:355.1px;top:0;width:52.5px;height:13.6px;line-height:14.799999999999999px;"></div>
<div class="cell d" style="left:407.6px;top:0;width:52.5px;height:13.6px;line-height:14.799999999999999px;"></div>
<div class="cell d" style="left:460.1px;top:0;width:7.5px;height:13.6px;line-height:14.799999999999999px;"></div>
</div>
<div class="" style="left:4.5px;top:168px;width:1px;height:267px;background:#d9d9d9;"></div>
<div class="" style="left:468.5px;top:152px;width:5px;height:283px;background:#eeeef6;"></div>
<div class="btn " style="left:475px;top:154px;width:38.5px;height:13px;line-height:11.5px;">出单</div>
<div class="btn" style="left:516px;top:153.5px;width:39.5px;height:14px;line-height:12px;border:1px solid #5fb585;border-radius:2px;color:#1e88e5;box-shadow:0 0 1.5px rgba(46,155,90,.6);">BOM查看</div>
<div class="btn " style="left:558px;top:154px;width:38.5px;height:13px;line-height:11.5px;">展开</div>
<div class="btn " style="left:599px;top:154px;width:39px;height:13px;line-height:11.5px;">展开撤销</div>
<div class="btn " style="left:640px;top:154px;width:38.5px;height:13px;line-height:11.5px;">派工</div>
<div class="hdr" style="left:474.5px;top:168.5px;width:525.5px;height:14.1px;"></div>
<div class="hc" style="left:474.5px;top:169.5px;width:9.100000000000023px;height:12.1px;line-height:12.1px;font-size:6.2px;letter-spacing:0.2px;padding-right:0px;"></div>
<div class="hc" style="left:483.6px;top:169.5px;width:28.0px;height:12.1px;line-height:12.1px;font-size:6.2px;letter-spacing:0.2px;padding-right:8px;"></div>
<div class="hc" style="left:511.6px;top:169.5px;width:63.0px;height:12.1px;line-height:12.1px;font-size:6.2px;letter-spacing:0.2px;padding-right:8px;">生产单号</div>
<div class="hc" style="left:574.6px;top:169.5px;width:80.0px;height:12.1px;line-height:12.1px;font-size:6.2px;letter-spacing:0.2px;padding-right:8px;">生产批号</div>
<div class="hc" style="left:654.6px;top:169.5px;width:52.5px;height:12.1px;line-height:12.1px;font-size:6.2px;letter-spacing:0.2px;padding-right:8px;">物料号</div>
<div class="hc" style="left:707.1px;top:169.5px;width:144.5px;height:12.1px;line-height:12.1px;font-size:6.2px;letter-spacing:0.2px;padding-right:8px;">物料描述</div>
<div class="hc" style="left:851.6px;top:169.5px;width:105.5px;height:12.1px;line-height:12.1px;font-size:6.2px;letter-spacing:0.2px;padding-right:8px;">线号</div>
<div class="hc" style="left:957.1px;top:169.5px;width:53.5px;height:12.1px;line-height:12.1px;font-size:6.2px;letter-spacing:0.2px;padding-right:8px;"></div>
<div class="t" style="left:474.5px;top:168.5px;width:9px;height:14px;line-height:14px;font-size:6.6px;background:#fbfbfb;color:#333;padding-left:1px;">26</div>
<div class="t" style="left:484px;top:169.5px;width:26px;height:11.5px;line-height:11px;font-weight:bold;color:#222;padding-left:2px;font-size:6.2px;">选择</div>
<div class="t " style="left:957px;top:169.5px;width:43px;height:11.5px;line-height:11.5px;text-align:center;font-size:6px;color:#444;">MRP控制者</div>
<div class="row sel" style="left:0;top:182.60px;width:1000px;height:13.6px;">
<div class="rn" style="left:474.5px;top:0;width:9px;height:13.6px;line-height:14.799999999999999px;background-color:#fbfbfb;border-right-color:#f3f3f3;">1</div>
<div class="cell" style="left:483.5px;top:0;width:28.100000000000023px;height:13.6px;"><div class="chk" style="left:8px;top:2px;width:9.4px;height:9.4px;"></div></div>
<div class="cell d" style="left:511.6px;top:0;width:63.0px;height:13.6px;line-height:14.799999999999999px;">001039525690</div>
<div class="cell d" style="left:574.6px;top:0;width:80.0px;height:13.6px;line-height:14.799999999999999px;">230103-XARP325H-1/3</div>
<div class="cell d" style="left:654.6px;top:0;width:52.5px;height:13.6px;line-height:14.799999999999999px;">276640520</div>
<div class="cell d" style="left:707.1px;top:0;width:144.5px;height:13.6px;line-height:14.799999999999999px;">XARP325HII.15.3.1.2 <span class="c">称量搅拌部分布线</span></div>
<div class="cell d" style="left:851.6px;top:0;width:105.5px;height:13.6px;line-height:14.799999999999999px;"><span class="c">拌和站分厂</span>-<span class="c">电器装配工段</span></div>
<div class="cell d" style="left:957.1px;top:0;width:53.5px;height:13.6px;line-height:14.799999999999999px;">H30</div>
</div>
<div class="row " style="left:0;top:196.20px;width:1000px;height:13.6px;">
<div class="rn" style="left:474.5px;top:0;width:9px;height:13.6px;line-height:14.799999999999999px;background-color:#fbfbfb;border-right-color:#f3f3f3;">2</div>
<div class="cell" style="left:483.5px;top:0;width:28.100000000000023px;height:13.6px;"><div class="chk" style="left:8px;top:2px;width:9.4px;height:9.4px;"></div></div>
<div class="cell d" style="left:511.6px;top:0;width:63.0px;height:13.6px;line-height:14.799999999999999px;">001039525692</div>
<div class="cell d" style="left:574.6px;top:0;width:80.0px;height:13.6px;line-height:14.799999999999999px;">230103-XARP325H-1/3</div>
<div class="cell d" style="left:654.6px;top:0;width:52.5px;height:13.6px;line-height:14.799999999999999px;">276640522</div>
<div class="cell d" style="left:707.1px;top:0;width:144.5px;height:13.6px;line-height:14.799999999999999px;">XARP325HII.15.3.1.4 <span class="c">除尘部分布线（大气反吹）</span></div>
<div class="cell d" style="left:851.6px;top:0;width:105.5px;height:13.6px;line-height:14.799999999999999px;"><span class="c">拌和站分厂</span>-<span class="c">电器装配工段</span></div>
<div class="cell d" style="left:957.1px;top:0;width:53.5px;height:13.6px;line-height:14.799999999999999px;">H30</div>
</div>
<div class="row " style="left:0;top:209.80px;width:1000px;height:13.6px;">
<div class="rn" style="left:474.5px;top:0;width:9px;height:13.6px;line-height:14.799999999999999px;background-color:#fbfbfb;border-right-color:#f3f3f3;">3</div>
<div class="cell" style="left:483.5px;top:0;width:28.100000000000023px;height:13.6px;"><div class="chk" style="left:8px;top:2px;width:9.4px;height:9.4px;"></div></div>
<div class="cell d" style="left:511.6px;top:0;width:63.0px;height:13.6px;line-height:14.799999999999999px;">001039525689</div>
<div class="cell d" style="left:574.6px;top:0;width:80.0px;height:13.6px;line-height:14.799999999999999px;">230103-XARP325H-1/3</div>
<div class="cell d" style="left:654.6px;top:0;width:52.5px;height:13.6px;line-height:14.799999999999999px;">276640519</div>
<div class="cell d" style="left:707.1px;top:0;width:144.5px;height:13.6px;line-height:14.799999999999999px;">XARP325HII.15.3.1.1 <span class="c">冷料部分布线</span></div>
<div class="cell d" style="left:851.6px;top:0;width:105.5px;height:13.6px;line-height:14.799999999999999px;"><span class="c">拌和站分厂</span>-<span class="c">电器装配工段</span></div>
<div class="cell d" style="left:957.1px;top:0;width:53.5px;height:13.6px;line-height:14.799999999999999px;">H30</div>
</div>
<div class="row " style="left:0;top:223.40px;width:1000px;height:13.6px;">
<div class="rn" style="left:474.5px;top:0;width:9px;height:13.6px;line-height:14.799999999999999px;background-color:#fbfbfb;border-right-color:#f3f3f3;">4</div>
<div class="cell" style="left:483.5px;top:0;width:28.100000000000023px;height:13.6px;"><div class="chk" style="left:8px;top:2px;width:9.4px;height:9.4px;"></div></div>
<div class="cell d" style="left:511.6px;top:0;width:63.0px;height:13.6px;line-height:14.799999999999999px;">001039525691</div>
<div class="cell d" style="left:574.6px;top:0;width:80.0px;height:13.6px;line-height:14.799999999999999px;">230103-XARP325H-1/3</div>
<div class="cell d" style="left:654.6px;top:0;width:52.5px;height:13.6px;line-height:14.799999999999999px;">276640521</div>
<div class="cell d" style="left:707.1px;top:0;width:144.5px;height:13.6px;line-height:14.799999999999999px;">XARP325HII.15.3.1.3 <span class="c">热骨料仓部分布线</span></div>
<div class="cell d" style="left:851.6px;top:0;width:105.5px;height:13.6px;line-height:14.799999999999999px;"><span class="c">拌和站分厂</span>-<span class="c">电器装配工段</span></div>
<div class="cell d" style="left:957.1px;top:0;width:53.5px;height:13.6px;line-height:14.799999999999999px;">H30</div>
</div>
<div class="row org" style="left:0;top:237.00px;width:1000px;height:13.6px;">
<div class="rn" style="left:474.5px;top:0;width:9px;height:13.6px;line-height:14.799999999999999px;background-color:#fbfbfb;border-right-color:#f3f3f3;">5</div>
<div class="cell" style="left:483.5px;top:0;width:28.100000000000023px;height:13.6px;"><div class="chk" style="left:8px;top:2px;width:9.4px;height:9.4px;"></div></div>
<div class="cell d" style="left:511.6px;top:0;width:63.0px;height:13.6px;line-height:14.799999999999999px;">001039525709</div>
<div class="cell d" style="left:574.6px;top:0;width:80.0px;height:13.6px;line-height:14.799999999999999px;">230103-XARP325H-1/3</div>
<div class="cell d" style="left:654.6px;top:0;width:52.5px;height:13.6px;line-height:14.799999999999999px;">276808201</div>
<div class="cell d" style="left:707.1px;top:0;width:144.5px;height:13.6px;line-height:14.799999999999999px;">XAP243.15.5.3 <span class="c">现场放料接线盒装配</span></div>
<div class="cell d" style="left:851.6px;top:0;width:105.5px;height:13.6px;line-height:14.799999999999999px;"><span class="c">拌和站分厂</span>-<span class="c">电器装配工段</span></div>
<div class="cell d" style="left:957.1px;top:0;width:53.5px;height:13.6px;line-height:14.799999999999999px;">H30</div>
</div>
<div class="row org" style="left:0;top:250.60px;width:1000px;height:13.6px;">
<div class="rn" style="left:474.5px;top:0;width:9px;height:13.6px;line-height:14.799999999999999px;background-color:#fbfbfb;border-right-color:#f3f3f3;">6</div>
<div class="cell" style="left:483.5px;top:0;width:28.100000000000023px;height:13.6px;"><div class="chk" style="left:8px;top:2px;width:9.4px;height:9.4px;"></div></div>
<div class="cell d" style="left:511.6px;top:0;width:63.0px;height:13.6px;line-height:14.799999999999999px;">001039525696</div>
<div class="cell d" style="left:574.6px;top:0;width:80.0px;height:13.6px;line-height:14.799999999999999px;">230103-XARP325H-1/3</div>
<div class="cell d" style="left:654.6px;top:0;width:52.5px;height:13.6px;line-height:14.799999999999999px;">276640920</div>
<div class="cell d" style="left:707.1px;top:0;width:144.5px;height:13.6px;line-height:14.799999999999999px;">XARP325HII.15.4.1 <span class="c">拌锅接线盒装配</span></div>
<div class="cell d" style="left:851.6px;top:0;width:105.5px;height:13.6px;line-height:14.799999999999999px;"><span class="c">拌和站分厂</span>-<span class="c">电器装配工段</span></div>
<div class="cell d" style="left:957.1px;top:0;width:53.5px;height:13.6px;line-height:14.799999999999999px;">H30</div>
</div>
<div class="row org" style="left:0;top:264.20px;width:1000px;height:13.6px;">
<div class="rn" style="left:474.5px;top:0;width:9px;height:13.6px;line-height:14.799999999999999px;background-color:#fbfbfb;border-right-color:#f3f3f3;">7</div>
<div class="cell" style="left:483.5px;top:0;width:28.100000000000023px;height:13.6px;"><div class="chk" style="left:8px;top:2px;width:9.4px;height:9.4px;"></div></div>
<div class="cell d" style="left:511.6px;top:0;width:63.0px;height:13.6px;line-height:14.799999999999999px;">001039525694</div>
<div class="cell d" style="left:574.6px;top:0;width:80.0px;height:13.6px;line-height:14.799999999999999px;">230103-XARP325H-1/3</div>
<div class="cell d" style="left:654.6px;top:0;width:52.5px;height:13.6px;line-height:14.799999999999999px;">276640901</div>
<div class="cell d" style="left:707.1px;top:0;width:144.5px;height:13.6px;line-height:14.799999999999999px;">ARCS4005FⅡ.2 <span class="c">配电室装配</span></div>
<div class="cell d" style="left:851.6px;top:0;width:105.5px;height:13.6px;line-height:14.799999999999999px;"><span class="c">拌和站分厂</span>-<span class="c">电器装配工段</span></div>
<div class="cell d" style="left:957.1px;top:0;width:53.5px;height:13.6px;line-height:14.799999999999999px;">H30</div>
</div>
<div class="row org" style="left:0;top:277.80px;width:1000px;height:13.6px;">
<div class="rn" style="left:474.5px;top:0;width:9px;height:13.6px;line-height:14.799999999999999px;background-color:#fbfbfb;border-right-color:#f3f3f3;">8</div>
<div class="cell" style="left:483.5px;top:0;width:28.100000000000023px;height:13.6px;"><div class="chk" style="left:8px;top:2px;width:9.4px;height:9.4px;"></div></div>
<div class="cell d" style="left:511.6px;top:0;width:63.0px;height:13.6px;line-height:14.799999999999999px;">001039525713</div>
<div class="cell d" style="left:574.6px;top:0;width:80.0px;height:13.6px;line-height:14.799999999999999px;">230103-XARP325H-1/3</div>
<div class="cell d" style="left:654.6px;top:0;width:52.5px;height:13.6px;line-height:14.799999999999999px;">276813082</div>
<div class="cell d" style="left:707.1px;top:0;width:144.5px;height:13.6px;line-height:14.799999999999999px;">XAP243.15.5Ⅱ.3 <span class="c">翻板成品仓上部接线盒装配</span></div>
<div class="cell d" style="left:851.6px;top:0;width:105.5px;height:13.6px;line-height:14.799999999999999px;"><span class="c">拌和站分厂</span>-<span class="c">电器装配工段</span></div>
<div class="cell d" style="left:957.1px;top:0;width:53.5px;height:13.6px;line-height:14.799999999999999px;">H30</div>
</div>
<div class="row org" style="left:0;top:291.40px;width:1000px;height:13.6px;">
<div class="rn" style="left:474.5px;top:0;width:9px;height:13.6px;line-height:14.799999999999999px;background-color:#fbfbfb;border-right-color:#f3f3f3;">9</div>
<div class="cell" style="left:483.5px;top:0;width:28.100000000000023px;height:13.6px;"><div class="chk" style="left:8px;top:2px;width:9.4px;height:9.4px;"></div></div>
<div class="cell d" style="left:511.6px;top:0;width:63.0px;height:13.6px;line-height:14.799999999999999px;">001039525710</div>
<div class="cell d" style="left:574.6px;top:0;width:80.0px;height:13.6px;line-height:14.799999999999999px;">230103-XARP325H-1/3</div>
<div class="cell d" style="left:654.6px;top:0;width:52.5px;height:13.6px;line-height:14.799999999999999px;">276808202</div>
<div class="cell d" style="left:707.1px;top:0;width:144.5px;height:13.6px;line-height:14.799999999999999px;">XAP243.15.5.4 <span class="c">成品仓下部气路盒电器件装配</span></div>
<div class="cell d" style="left:851.6px;top:0;width:105.5px;height:13.6px;line-height:14.799999999999999px;"><span class="c">拌和站分厂</span>-<span class="c">电器装配工段</span></div>
<div class="cell d" style="left:957.1px;top:0;width:53.5px;height:13.6px;line-height:14.799999999999999px;">H30</div>
</div>
<div class="row org" style="left:0;top:305.00px;width:1000px;height:13.6px;">
<div class="rn" style="left:474.5px;top:0;width:9px;height:13.6px;line-height:14.799999999999999px;background-color:#fbfbfb;border-right-color:#f3f3f3;">10</div>
<div class="cell" style="left:483.5px;top:0;width:28.100000000000023px;height:13.6px;"><div class="chk" style="left:8px;top:2px;width:9.4px;height:9.4px;"></div></div>
<div class="cell d" style="left:511.6px;top:0;width:63.0px;height:13.6px;line-height:14.799999999999999px;">001039525702</div>
<div class="cell d" style="left:574.6px;top:0;width:80.0px;height:13.6px;line-height:14.799999999999999px;">230103-XARP325H-1/3</div>
<div class="cell d" style="left:654.6px;top:0;width:52.5px;height:13.6px;line-height:14.799999999999999px;">276507635</div>
<div class="cell d" style="left:707.1px;top:0;width:144.5px;height:13.6px;line-height:14.799999999999999px;">XAP405.15.4.7 <span class="c">搅拌器室外控制盒装配</span></div>
<div class="cell d" style="left:851.6px;top:0;width:105.5px;height:13.6px;line-height:14.799999999999999px;"><span class="c">拌和站分厂</span>-<span class="c">电器装配工段</span></div>
<div class="cell d" style="left:957.1px;top:0;width:53.5px;height:13.6px;line-height:14.799999999999999px;">H30</div>
</div>
<div class="row org" style="left:0;top:318.60px;width:1000px;height:13.6px;">
<div class="rn" style="left:474.5px;top:0;width:9px;height:13.6px;line-height:14.799999999999999px;background-color:#fbfbfb;border-right-color:#f3f3f3;">11</div>
<div class="cell" style="left:483.5px;top:0;width:28.100000000000023px;height:13.6px;"><div class="chk" style="left:8px;top:2px;width:9.4px;height:9.4px;"></div></div>
<div class="cell d" style="left:511.6px;top:0;width:63.0px;height:13.6px;line-height:14.799999999999999px;">001039525700</div>
<div class="cell d" style="left:574.6px;top:0;width:80.0px;height:13.6px;line-height:14.799999999999999px;">230103-XARP325H-1/3</div>
<div class="cell d" style="left:654.6px;top:0;width:52.5px;height:13.6px;line-height:14.799999999999999px;">276507615</div>
<div class="cell d" style="left:707.1px;top:0;width:144.5px;height:13.6px;line-height:14.799999999999999px;">XAP405.15.4.3 <span class="c">热料仓气路盒电器件装配</span></div>
<div class="cell d" style="left:851.6px;top:0;width:105.5px;height:13.6px;line-height:14.799999999999999px;"><span class="c">拌和站分厂</span>-<span class="c">电器装配工段</span></div>
<div class="cell d" style="left:957.1px;top:0;width:53.5px;height:13.6px;line-height:14.799999999999999px;">H30</div>
</div>
<div class="row org" style="left:0;top:332.20px;width:1000px;height:13.6px;">
<div class="rn" style="left:474.5px;top:0;width:9px;height:13.6px;line-height:14.799999999999999px;background-color:#fbfbfb;border-right-color:#f3f3f3;">12</div>
<div class="cell" style="left:483.5px;top:0;width:28.100000000000023px;height:13.6px;"><div class="chk" style="left:8px;top:2px;width:9.4px;height:9.4px;"></div></div>
<div class="cell d" style="left:511.6px;top:0;width:63.0px;height:13.6px;line-height:14.799999999999999px;">001039525701</div>
<div class="cell d" style="left:574.6px;top:0;width:80.0px;height:13.6px;line-height:14.799999999999999px;">230103-XARP325H-1/3</div>
<div class="cell d" style="left:654.6px;top:0;width:52.5px;height:13.6px;line-height:14.799999999999999px;">276507618</div>
<div class="cell d" style="left:707.1px;top:0;width:144.5px;height:13.6px;line-height:14.799999999999999px;">XAP405.15.4.6 <span class="c">热料仓料位接线盒装配</span></div>
<div class="cell d" style="left:851.6px;top:0;width:105.5px;height:13.6px;line-height:14.799999999999999px;"><span class="c">拌和站分厂</span>-<span class="c">电器装配工段</span></div>
<div class="cell d" style="left:957.1px;top:0;width:53.5px;height:13.6px;line-height:14.799999999999999px;">H30</div>
</div>
<div class="" style="left:474px;top:168.5px;width:1px;height:177px;background:#e4e4e4;"></div>
<div class="" style="left:474px;top:345.5px;width:526px;height:6.5px;background:#f1f1f1;"></div>
<div class="" style="left:474px;top:346px;width:311px;height:5.5px;background:#c4c4c4;"></div>
<div class="" style="left:992.5px;top:347.3px;width:0px;height:0px;border-top:1.6px solid transparent;border-bottom:1.6px solid transparent;border-left:2.2px solid #444;"></div>
<div class="hdr" style="left:474.5px;top:372.5px;width:525.5px;height:14px;"></div>
<div class="hc" style="left:474.5px;top:373.5px;width:60.60000000000002px;height:12px;line-height:12px;font-size:6.2px;letter-spacing:0.3px;padding-right:8px;"></div>
<div class="hc" style="left:535.1px;top:373.5px;width:52.5px;height:12px;line-height:12px;font-size:6.2px;letter-spacing:0.3px;padding-right:8px;"></div>
<div class="hc" style="left:587.6px;top:373.5px;width:52.60000000000002px;height:12px;line-height:12px;font-size:6.2px;letter-spacing:0.3px;padding-right:8px;"></div>
<div class="hc" style="left:640.2px;top:373.5px;width:52.39999999999998px;height:12px;line-height:12px;font-size:6.2px;letter-spacing:0.3px;padding-right:8px;">工序状态</div>
<div class="hc" style="left:692.6px;top:373.5px;width:53.0px;height:12px;line-height:12px;font-size:6.2px;letter-spacing:0.3px;padding-right:8px;">计划数量</div>
<div class="hc" style="left:745.6px;top:373.5px;width:52.5px;height:12px;line-height:12px;font-size:6.2px;letter-spacing:0.3px;padding-right:8px;">排产数</div>
<div class="hc" style="left:798.1px;top:373.5px;width:52.5px;height:12px;line-height:12px;font-size:6.2px;letter-spacing:0.3px;padding-right:8px;">派工标记</div>
<div class="hc" style="left:850.6px;top:373.5px;width:52.700000000000045px;height:12px;line-height:12px;font-size:6.2px;letter-spacing:0.3px;padding-right:8px;">派工时间</div>
<div class="hc" style="left:903.3000000000001px;top:373.5px;width:52.89999999999998px;height:12px;line-height:12px;font-size:6.2px;letter-spacing:0.3px;padding-right:8px;">派工数</div>
<div class="hc" style="left:956.2px;top:373.5px;width:52.39999999999998px;height:12px;line-height:12px;font-size:6.2px;letter-spacing:0.3px;padding-right:8px;">单件工时</div>
<div class="row sel" style="left:0;top:386.5px;width:1000px;height:14.6px;">
<div class="cell" style="left:474.5px;top:0;width:60.60000000000002px;height:14.6px;line-height:13.6px;"></div>
<div class="cell" style="left:535.1px;top:0;width:52.5px;height:14.6px;line-height:13.6px;"></div>
<div class="cell" style="left:587.6px;top:0;width:52.60000000000002px;height:14.6px;line-height:13.6px;"></div>
<div class="cell" style="left:640.2px;top:0;width:52.39999999999998px;height:14.6px;line-height:13.6px;"></div>
<div class="cell" style="left:692.6px;top:0;width:53.0px;height:14.6px;line-height:13.6px;">1</div>
<div class="cell" style="left:745.6px;top:0;width:52.5px;height:14.6px;line-height:13.6px;"></div>
<div class="cell" style="left:798.1px;top:0;width:52.5px;height:14.6px;line-height:13.6px;"></div>
<div class="cell" style="left:850.6px;top:0;width:52.700000000000045px;height:14.6px;line-height:13.6px;"></div>
<div class="cell" style="left:903.3000000000001px;top:0;width:52.89999999999998px;height:14.6px;line-height:13.6px;"></div>
<div class="cell" style="left:956.2px;top:0;width:52.39999999999998px;height:14.6px;line-height:13.6px;"></div>
</div>
<div style="left:179px;top:290.5px;width:420.6px;height:160px;background:#fff;border-radius:3px;box-shadow:0 0 8px rgba(0,0,0,.30);"></div>
<div class="t " style="left:183.5px;top:296px;height:12px;line-height:12px;font-size:7.8px;color:#444;">BOM明细</div>
<svg style="position:absolute;left:555.5px;top:293.5px" width="7" height="7" viewBox="0 0 14 14"><rect x="1.5" y="1.5" width="11" height="11" fill="none" stroke="#666" stroke-width="1.4"/></svg>
<svg style="position:absolute;left:582px;top:293.5px" width="7" height="7" viewBox="0 0 14 14"><path d="M1.5 1.5 L12.5 12.5 M12.5 1.5 L1.5 12.5" stroke="#666" stroke-width="1.4"/></svg>
<div class="t lbl" style="left:181px;top:314px;height:13.6px;line-height:13.6px;">订单</div>
<div class="inp" style="left:220.9px;top:314px;width:98.8px;height:13.6px;"></div>
<div class="t " style="left:225.9px;top:314px;height:13.6px;line-height:13.6px;font-size:6.7px;color:#444;">001039525690</div>
<svg style="position:absolute;left:310.40px;top:318.40px" width="6" height="6" viewBox="0 0 6 6"><circle cx="3" cy="3" r="2.45" fill="#3aa568"/><circle cx="3" cy="3" r="0.7" fill="#b9e0c9"/></svg>
<div class="t lbl" style="left:330px;top:314px;height:13.6px;line-height:13.6px;">物料号</div>
<div class="inp" style="left:370.6px;top:314px;width:98.4px;height:13.6px;"></div>
<svg style="position:absolute;left:459.70px;top:318.40px" width="6" height="6" viewBox="0 0 6 6"><circle cx="3" cy="3" r="2.45" fill="#3aa568"/><circle cx="3" cy="3" r="0.7" fill="#b9e0c9"/></svg>
<div class="t lbl" style="left:479.5px;top:314px;height:13.6px;line-height:13.6px;">物料描述</div>
<div class="inp" style="left:520.2px;top:314px;width:79.8px;height:13.6px;border-right:none;border-radius:2px 0 0 2px;"></div>
<div class="btn " style="left:181px;top:329.8px;width:38.6px;height:13px;line-height:11.5px;">查询</div>
<div class="btn " style="left:221.8px;top:329.8px;width:38.8px;height:13px;line-height:11.5px;">关闭</div>
<div class="t " style="left:206.5px;top:345px;height:11px;line-height:11px;font-size:6.6px;color:#333;">276640520--</div>
<div class="hdr" style="left:336.8px;top:344.5px;width:255.2px;height:13.8px;"></div>
<div class="hc" style="left:336.8px;top:345.5px;width:8.300000000000011px;height:11.8px;line-height:11.8px;font-size:6.4px;letter-spacing:0.3px;padding-right:0px;"></div>
<div class="hc" style="left:345.1px;top:345.5px;width:63.5px;height:11.8px;line-height:11.8px;font-size:6.4px;letter-spacing:0.3px;padding-right:8px;">零件号</div>
<div class="hc" style="left:408.6px;top:345.5px;width:105.0px;height:11.8px;line-height:11.8px;font-size:6.4px;letter-spacing:0.3px;padding-right:8px;">零件号</div>
<div class="hc" style="left:513.6px;top:345.5px;width:53.0px;height:11.8px;line-height:11.8px;font-size:6.4px;letter-spacing:0.3px;padding-right:8px;">每台件数</div>
<div class="hc" style="left:566.6px;top:345.5px;width:26.0px;height:11.8px;line-height:11.8px;font-size:6.4px;letter-spacing:0.3px;padding-right:8px;"></div>
<div class="t" style="left:336.8px;top:344.5px;width:7.6px;height:14px;line-height:14px;font-size:6.6px;background:#fbfbfb;color:#333;">35</div>
<div class="row sel" style="left:0;top:358.30px;width:1000px;height:13.6px;">
<div class="rn" style="left:336.8px;top:0;width:7.8px;height:13.6px;line-height:14.799999999999999px;">1</div>
<div class="cell d" style="left:344.6px;top:0;width:64.0px;height:13.6px;line-height:14.799999999999999px;">803604873</div>
<div class="cell d" style="left:408.6px;top:0;width:105.0px;height:13.6px;line-height:14.799999999999999px;">XCK-J10541C <span class="c">行程开关</span></div>
<div class="cell d" style="left:513.6px;top:0;width:53.0px;height:13.6px;line-height:14.799999999999999px;">1</div>
<div class="cell d" style="left:566.6px;top:0;width:26.0px;height:13.6px;line-height:14.799999999999999px;">276640520</div>
</div>
<div class="row " style="left:0;top:371.90px;width:1000px;height:13.6px;">
<div class="rn" style="left:336.8px;top:0;width:7.8px;height:13.6px;line-height:14.799999999999999px;">2</div>
<div class="cell d" style="left:344.6px;top:0;width:64.0px;height:13.6px;line-height:14.799999999999999px;">805046554</div>
<div class="cell d" style="left:408.6px;top:0;width:105.0px;height:13.6px;line-height:14.799999999999999px;">GB/T5783-2000 <span class="c">螺栓</span> M12×60(<span class="c">达克罗</span>)</div>
<div class="cell d" style="left:513.6px;top:0;width:53.0px;height:13.6px;line-height:14.799999999999999px;">12</div>
<div class="cell d" style="left:566.6px;top:0;width:26.0px;height:13.6px;line-height:14.799999999999999px;">276640520</div>
</div>
<div class="row " style="left:0;top:385.50px;width:1000px;height:13.6px;">
<div class="rn" style="left:336.8px;top:0;width:7.8px;height:13.6px;line-height:14.799999999999999px;">3</div>
<div class="cell d" style="left:344.6px;top:0;width:64.0px;height:13.6px;line-height:14.799999999999999px;">805338383</div>
<div class="cell d" style="left:408.6px;top:0;width:105.0px;height:13.6px;line-height:14.799999999999999px;">GB/T97.1-2002 <span class="c">垫圈</span> 5(<span class="c">达克罗</span>)</div>
<div class="cell d" style="left:513.6px;top:0;width:53.0px;height:13.6px;line-height:14.799999999999999px;">12</div>
<div class="cell d" style="left:566.6px;top:0;width:26.0px;height:13.6px;line-height:14.799999999999999px;">276640520</div>
</div>
<div class="row " style="left:0;top:399.10px;width:1000px;height:13.6px;">
<div class="rn" style="left:336.8px;top:0;width:7.8px;height:13.6px;line-height:14.799999999999999px;">4</div>
<div class="cell d" style="left:344.6px;top:0;width:64.0px;height:13.6px;line-height:14.799999999999999px;">803604877</div>
<div class="cell d" style="left:408.6px;top:0;width:105.0px;height:13.6px;line-height:14.799999999999999px;">XS7-C4A1MPG13 <span class="c">接近开关</span></div>
<div class="cell d" style="left:513.6px;top:0;width:53.0px;height:13.6px;line-height:14.799999999999999px;">2</div>
<div class="cell d" style="left:566.6px;top:0;width:26.0px;height:13.6px;line-height:14.799999999999999px;">276640520</div>
</div>
<div class="row " style="left:0;top:412.70px;width:1000px;height:13.6px;">
<div class="rn" style="left:336.8px;top:0;width:7.8px;height:13.6px;line-height:14.799999999999999px;">5</div>
<div class="cell d" style="left:344.6px;top:0;width:64.0px;height:13.6px;line-height:14.799999999999999px;">803507322</div>
<div class="cell d" style="left:408.6px;top:0;width:105.0px;height:13.6px;line-height:14.799999999999999px;">HLJ-3 <span class="c">称重传感器（托利多）</span></div>
<div class="cell d" style="left:513.6px;top:0;width:53.0px;height:13.6px;line-height:14.799999999999999px;">3</div>
<div class="cell d" style="left:566.6px;top:0;width:26.0px;height:13.6px;line-height:14.799999999999999px;">276640520</div>
</div>
<div class="row " style="left:0;top:426.30px;width:1000px;height:13.6px;">
<div class="rn" style="left:336.8px;top:0;width:7.8px;height:13.6px;line-height:14.799999999999999px;">6</div>
<div class="cell d" style="left:344.6px;top:0;width:64.0px;height:13.6px;line-height:14.799999999999999px;">805139911</div>
<div class="cell d" style="left:408.6px;top:0;width:105.0px;height:13.6px;line-height:14.799999999999999px;">GB/T818-2000 <span class="c">螺钉</span> M6×25(<span class="c">达克罗</span>)</div>
<div class="cell d" style="left:513.6px;top:0;width:53.0px;height:13.6px;line-height:14.799999999999999px;">18</div>
<div class="cell d" style="left:566.6px;top:0;width:26.0px;height:13.6px;line-height:14.799999999999999px;">276640520</div>
</div>
<div class="" style="left:592px;top:358px;width:7px;height:77px;background:#f1f1f1;"></div>
<div class="" style="left:592.6px;top:367.3px;width:5.8px;height:57.5px;background:#c1c1c1;"></div>
<div class="" style="left:593.8px;top:361.5px;width:0px;height:0px;border-left:1.6px solid transparent;border-right:1.6px solid transparent;border-bottom:2.2px solid #444;"></div>
</body></html>
